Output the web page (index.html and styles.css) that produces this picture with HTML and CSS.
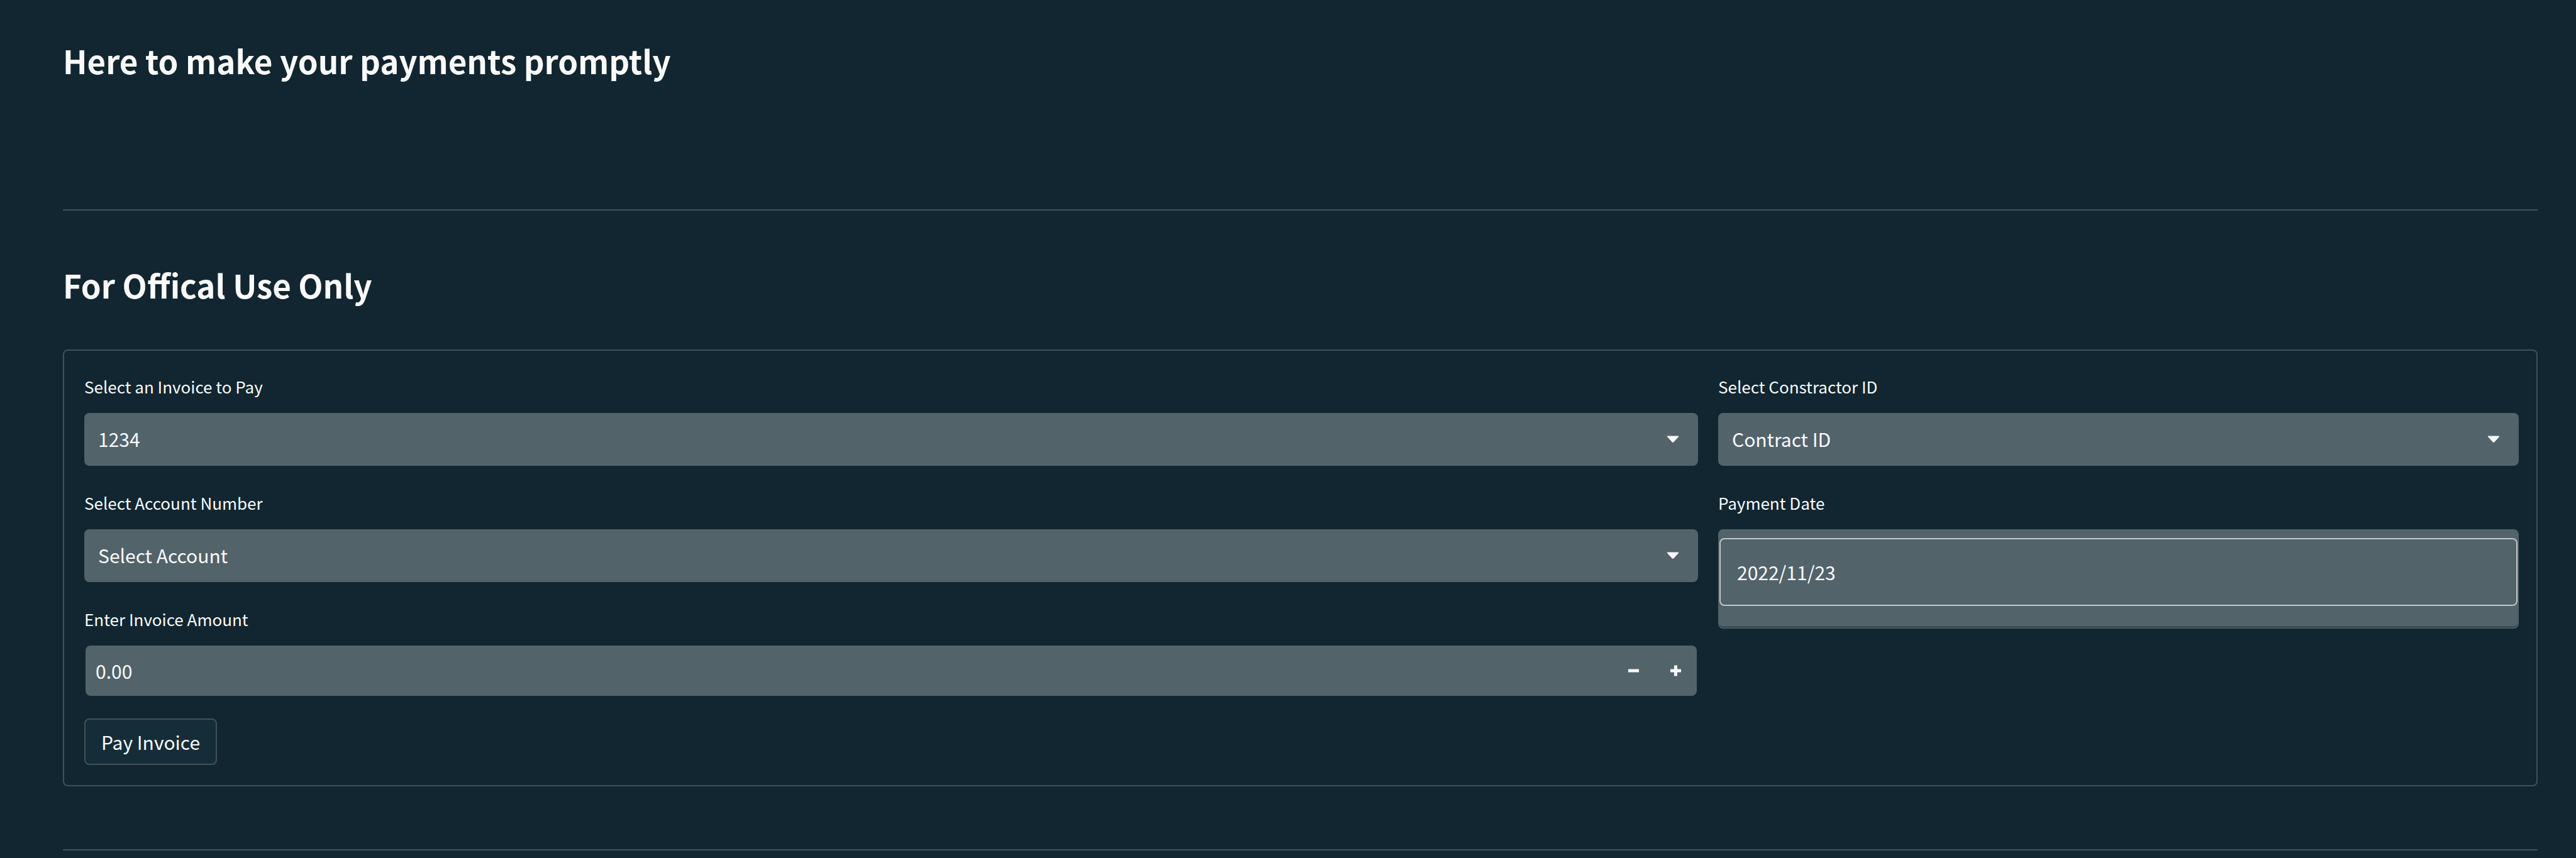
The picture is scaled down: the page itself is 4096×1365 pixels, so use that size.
FILE: index.html
```html
<!DOCTYPE html>
<html lang="en">
<head>
<meta charset="utf-8">
<title>Payments</title>
<link rel="stylesheet" href="styles.css">
</head>
<body>
<main class="page">
  <h2 class="heading">Here to make your payments promptly</h2>
  <hr class="rule rule-top">
  <h2 class="heading">For Offical Use Only</h2>
  <form class="card">
    <div class="column">
      <div class="field">
        <label class="label" for="invoice">Select an Invoice to Pay</label>
        <div class="select-wrap">
          <select class="control" id="invoice"><option>1234</option></select>
          <svg class="caret" viewBox="0 0 20 12" aria-hidden="true"><path d="M1.6 0.5h16.8q1.6 0.300 0.500 1.500l-7.600 8.200q-1.300 1.100-2.600 0L1.100 2q-1.100-1.200 0.500-1.500z"/></svg>
        </div>
      </div>
      <div class="field">
        <label class="label" for="account">Select Account Number</label>
        <div class="select-wrap">
          <select class="control" id="account"><option>Select Account</option></select>
          <svg class="caret" viewBox="0 0 20 12" aria-hidden="true"><path d="M1.6 0.5h16.8q1.6 0.300 0.500 1.500l-7.600 8.200q-1.300 1.100-2.600 0L1.100 2q-1.100-1.200 0.500-1.500z"/></svg>
        </div>
      </div>
      <div class="field">
        <label class="label" for="amount">Enter Invoice Amount</label>
        <div class="number">
          <input class="amount" id="amount" type="text" inputmode="decimal" value="0.00">
          <button class="step" type="button" aria-label="Decrease"><svg class="step-icon" viewBox="0 0 18 18"><path d="M0 6.500h17v5H0z"/></svg></button>
          <button class="step" type="button" aria-label="Increase"><svg class="step-icon" viewBox="0 0 18 18"><path d="M0 6.500h17v5H0zM6 0.500h5v17H6z"/></svg></button>
        </div>
      </div>
      <button class="pay" type="submit">Pay Invoice</button>
    </div>
    <div class="column">
      <div class="field">
        <label class="label" for="contract">Select Constractor ID</label>
        <div class="select-wrap">
          <select class="control" id="contract"><option>Contract ID</option></select>
          <svg class="caret" viewBox="0 0 20 12" aria-hidden="true"><path d="M1.6 0.5h16.8q1.6 0.300 0.500 1.500l-7.600 8.200q-1.300 1.100-2.600 0L1.100 2q-1.100-1.200 0.500-1.500z"/></svg>
        </div>
      </div>
      <div class="field">
        <label class="label" for="date">Payment Date</label>
        <div class="date-wrap">
          <input class="date" id="date" type="text" value="2022/11/23">
        </div>
      </div>
    </div>
  </form>
  <hr class="rule">
</main>
</body>
</html>
```

FILE: styles.css
```css
* {
  box-sizing: border-box;
}

body {
  margin: 0;
  min-height: 100vh;
  background: #112630;
  color: #fafafa;
  font-family: "Noto Sans CJK SC", "Noto Sans", sans-serif;
  font-size: 30px;
}

.page {
  padding: 60px 61px 10px 100px;
}

.heading {
  margin: 0;
  font-size: 51px;
  line-height: 72px;
  font-weight: 700;
}

.rule {
  margin: 0;
  border: 0;
  height: 2px;
  background: #41515a;
}

.rule-top {
  margin: 201px 0 82px;
}

.card {
  display: grid;
  grid-template-columns: 2566fr 1273fr;
  gap: 32px;
  margin: 67px 0 100px;
  padding: 40px 28px 32px 32px;
  border: 2px solid #41515a;
  border-radius: 8px;
}

.column {
  display: flex;
  flex-direction: column;
  align-items: stretch;
  gap: 34px;
}

.field + .field {
  margin-top: 8px;
}

.label {
  display: block;
  margin-bottom: 25px;
  font-size: 26px;
  line-height: 34px;
}

.select-wrap {
  display: grid;
  align-items: center;
}

.control {
  grid-area: 1 / 1;
  appearance: none;
  width: 100%;
  height: 84px;
  margin: 0;
  padding: 0 22px 2px;
  border: 0;
  border-radius: 8px;
  background: #52636a;
  color: inherit;
  font: inherit;
}

.caret {
  grid-area: 1 / 1;
  justify-self: end;
  width: 20px;
  height: 12px;
  margin-right: 30px;
  fill: #fafafa;
  pointer-events: none;
}

.number {
  display: flex;
  height: 80px;
  margin: 2px;
  border-radius: 8px;
  background: #52636a;
  overflow: hidden;
}

.amount {
  flex: 1;
  min-width: 0;
  padding: 0 16px;
  border: 0;
  background: none;
  color: inherit;
  font: inherit;
}

.step {
  display: flex;
  align-items: center;
  justify-content: center;
  width: 67px;
  padding: 0;
  border: 0;
  background: none;
}

.step-icon {
  width: 18px;
  height: 18px;
  fill: #fafafa;
}

.pay {
  align-self: flex-start;
  height: 74px;
  padding: 0 25px;
  border: 2px solid #41515a;
  border-radius: 8px;
  background: #152d38;
  color: inherit;
  font: inherit;
}

.date-wrap {
  padding: 12px 0 34px;
  border: 2px solid #52636a;
  border-radius: 8px;
  background: #52636a;
  box-shadow: inset 0 -1px 0 #112630;
}

.date {
  display: block;
  width: 100%;
  height: 108px;
  padding: 0 26px;
  border: 2px solid #c4c4c6;
  border-radius: 8px;
  background: none;
  color: inherit;
  font: inherit;
}
```
